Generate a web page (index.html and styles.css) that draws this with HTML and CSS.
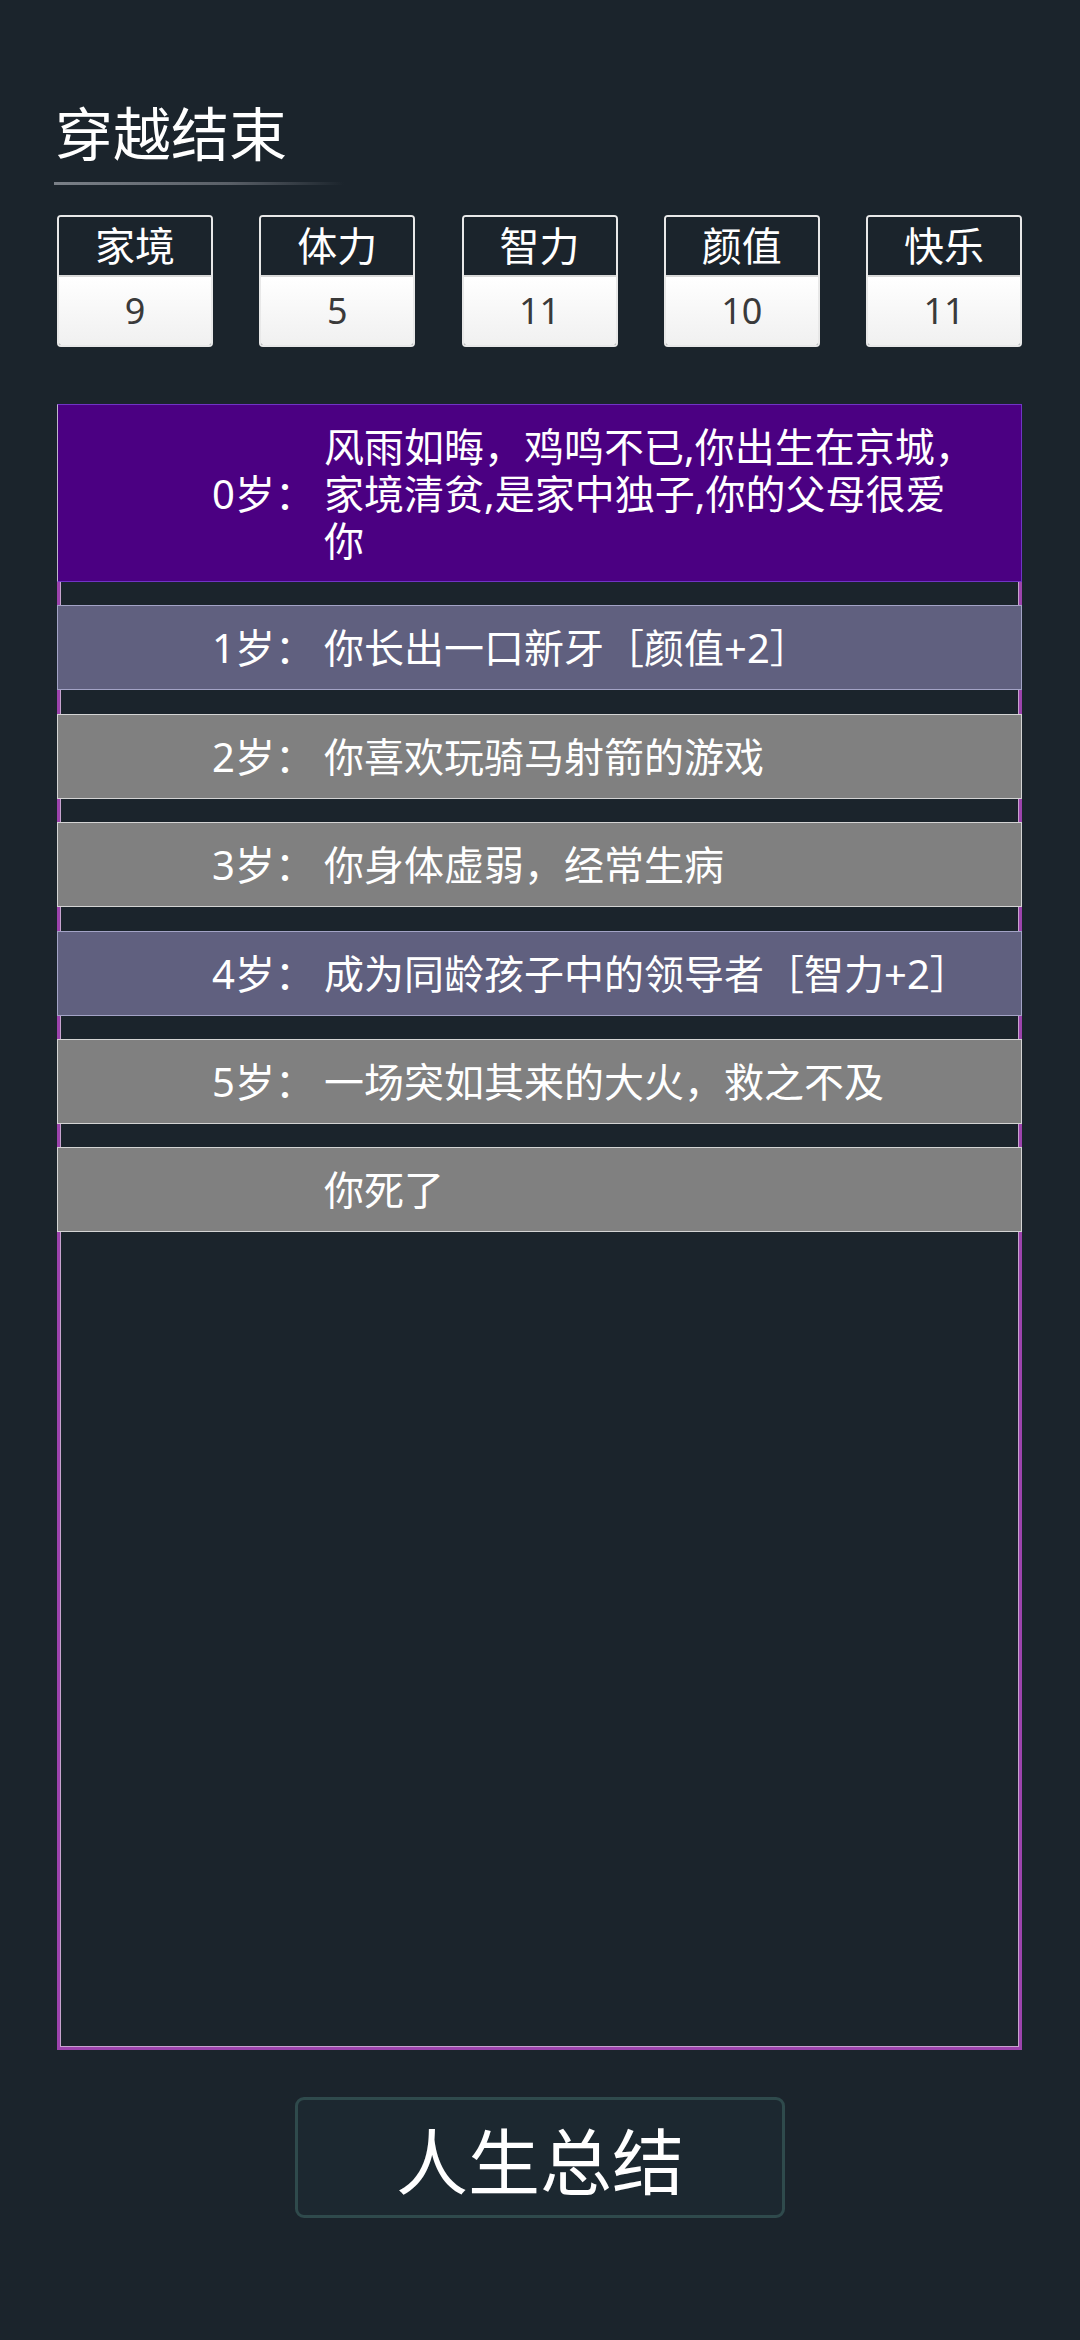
FILE: index.html
```html
<!DOCTYPE html>
<html lang="zh-CN">
<head>
    <meta charset="UTF-8">
    <meta name="viewport" content="width=device-width, initial-scale=1.0">
    <title>穿越结束</title>
    <link rel="stylesheet" href="styles.css">
</head>
<body>
    <div class="page">
        <h1 class="title">穿越结束</h1>
        <div class="title-line"></div>

        <div class="stats">
            <div class="stat">
                <div class="stat-name">家境</div>
                <div class="stat-value">9</div>
            </div>
            <div class="stat">
                <div class="stat-name">体力</div>
                <div class="stat-value">5</div>
            </div>
            <div class="stat">
                <div class="stat-name">智力</div>
                <div class="stat-value">11</div>
            </div>
            <div class="stat">
                <div class="stat-name">颜值</div>
                <div class="stat-value">10</div>
            </div>
            <div class="stat">
                <div class="stat-name">快乐</div>
                <div class="stat-value">11</div>
            </div>
        </div>

        <div class="timeline">
            <div class="event event-first">
                <div class="age">0岁：</div>
                <div class="text">风雨如晦，鸡鸣不已,你出生在京城，家境清贫,是家中独子,你的父母很爱你</div>
            </div>
            <div class="event event-bonus">
                <div class="age">1岁：</div>
                <div class="text">你长出一口新牙［颜值+2］</div>
            </div>
            <div class="event">
                <div class="age">2岁：</div>
                <div class="text">你喜欢玩骑马射箭的游戏</div>
            </div>
            <div class="event">
                <div class="age">3岁：</div>
                <div class="text">你身体虚弱，经常生病</div>
            </div>
            <div class="event event-bonus">
                <div class="age">4岁：</div>
                <div class="text">成为同龄孩子中的领导者［智力+2］</div>
            </div>
            <div class="event">
                <div class="age">5岁：</div>
                <div class="text">一场突如其来的大火，救之不及</div>
            </div>
            <div class="event">
                <div class="age"></div>
                <div class="text">你死了</div>
            </div>
        </div>

        <div class="actions">
            <button class="summary">人生总结</button>
        </div>
    </div>
</body>
</html>
```

FILE: styles.css
```css
body {
    margin: 0;
    background: #1b242c;
    color: #fff;
    font-family: "Noto Sans", "Noto Sans CJK SC", sans-serif;
}

.page {
    padding: 99px 58px 0 57px;
}

.title {
    margin: 0;
    margin-left: -2px;
    font-size: 58px;
    font-weight: normal;
    line-height: 70px;
}

.title-line {
    width: 290px;
    height: 3px;
    margin: 13px 0 0 -3px;
    background: linear-gradient(to right, #7a8088, #5a6068 60%, rgba(90, 96, 104, 0));
}

.stats {
    display: flex;
    justify-content: space-between;
    margin-top: 30px;
}

.stat {
    width: 156px;
    border: 2px solid #e8e8e8;
    border-radius: 4px;
    overflow: hidden;
    box-sizing: border-box;
}

.stat-name {
    height: 60px;
    line-height: 58px;
    text-align: center;
    font-size: 40px;
    background: #1b242c;
    border-bottom: 2px solid #d8d8d8;
    box-sizing: border-box;
}

.stat-value {
    height: 68px;
    line-height: 68px;
    text-align: center;
    font-size: 36px;
    color: #3a3a3a;
    background: linear-gradient(#ffffff, #f0f0f0);
}

.timeline {
    margin-top: 57px;
    height: 1646px;
    border: 3px solid #9d43ad;
    box-shadow: inset 1px 1px 0 #c7a3cf, inset -1px -1px 0 #c7a3cf;
    box-sizing: border-box;
    display: flex;
    flex-direction: column;
    gap: 23.4px;
}

.event {
    display: flex;
    align-items: center;
    height: 85px;
    margin: 0 -3px;
    background: #808080;
    border: 1px solid #d4d4d4;
    box-sizing: border-box;
    font-size: 40px;
    line-height: 47px;
}

.event-first {
    height: 178px;
    margin-top: -3px;
    background: #4b0082;
    border-color: #7034c4;
    border-left-color: #bfb6cc;
}

.event-bonus {
    background: #60607f;
    border-color: #a3a3c6;
}

.age {
    width: 262px;
    padding-right: 5px;
    box-sizing: border-box;
    flex-shrink: 0;
    text-align: right;
}

.text {
    width: 657px;
    margin-left: 4px;
}

.actions {
    display: flex;
    justify-content: center;
    margin-top: 47px;
}

.summary {
    width: 490px;
    height: 121px;
    margin-left: 1px;
    background: #1c2830;
    border: 3px solid #2f4a4c;
    border-radius: 9px;
    color: #fff;
    font-family: "Noto Sans CJK SC", sans-serif;
    font-size: 72px;
    line-height: 1;
}
```
